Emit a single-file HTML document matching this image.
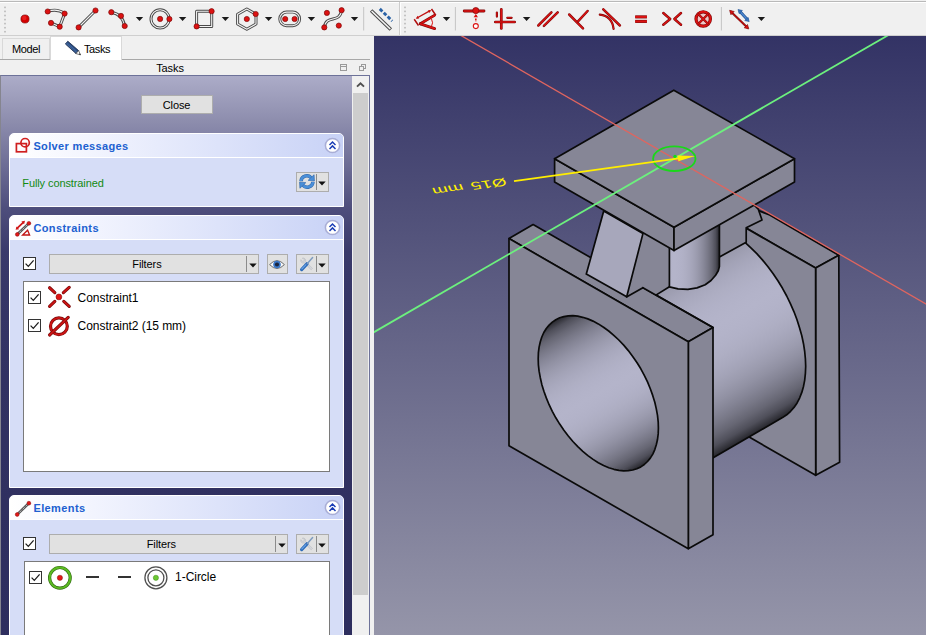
<!DOCTYPE html>
<html><head><meta charset="utf-8">
<style>
*{box-sizing:border-box;margin:0;padding:0}
html,body{width:926px;height:635px;overflow:hidden;background:#f0f0f0;font-family:"Liberation Sans",sans-serif;font-size:11px;letter-spacing:-0.1px;color:#000}
#tb{position:absolute;left:0;top:0;width:926px;height:36px;background:#f0f0f0}
#tbsvg{position:absolute;left:0;top:0}
#left{position:absolute;left:0;top:36px;width:374px;height:599px;background:#f0f0f0}
.tab{position:absolute}
#tabModel{left:2px;top:2px;width:48px;letter-spacing:-0.4px;height:21px;border:1px solid #d9d9d9;border-bottom:none;background:#f0f0f0;text-align:center;line-height:21px}
#tabTasks{left:50px;top:0;width:72px;letter-spacing:-0.4px;height:24px;background:#fff;border:1px solid #d9d9d9;border-bottom:none;line-height:25px;padding-left:33px}
#tabline2{position:absolute;left:0;top:23px;width:370px;height:1px;background:#a8a8a8}
#tabTasks{z-index:2}
#tabline{position:absolute;left:0;top:23px;width:51px;height:1px;background:#d9d9d9}
#ttl{position:absolute;left:0;top:24px;width:374px;height:15px;text-align:center;line-height:16px;padding-right:34px}
#frame{position:absolute;left:0;top:39px;width:370px;height:560px;border:1px solid #6d7299;border-left-color:#85858f;border-bottom:none}
#panel{position:absolute;left:1px;top:40px;width:351px;height:559px;background:linear-gradient(rgb(172,172,200) 0px,rgb(142,142,174) 44px,rgb(110,110,150) 88px,rgb(78,78,124) 132px,rgb(58,58,106) 176px,rgb(54,54,102) 220px,rgb(50,50,98) 300px,rgb(46,46,94) 559px)}
#sb{position:absolute;left:352px;top:40px;width:17px;height:559px;background:#f0f0f0}
#sbthumb{position:absolute;left:1px;top:17px;width:15px;height:502px;background:#cdcdcd}
.grp{position:absolute;left:8px;width:335px;background:#d6ddf7;border-radius:5px 5px 0 0;border:1px solid #fff;}
.gh{height:24px;background:linear-gradient(90deg,#ffffff 0%,#f2f4fe 25%,#c8d2f6 100%);border-radius:4px 4px 0 0;border-bottom:1px solid #fff;font-weight:bold;color:#2060d0;font-size:11px;line-height:25px;padding-left:23.4px;position:relative}
.gi{position:absolute;left:2px;top:2px}.chev{position:absolute;left:313.5px;top:2.6px}
.btn{position:absolute;background:#e1e1e1;border:1px solid #adadad;text-align:center}
.list{position:absolute;background:#fff;border:1px solid #7a7a7a}
.cb{position:absolute;width:13px;height:13px;border:1px solid #333;background:#fff}
.li{position:absolute;font-size:12px;letter-spacing:-0.05px;white-space:nowrap}
#view{position:absolute;left:374px;top:36px;width:552px;height:599px;overflow:hidden;background:linear-gradient(#333365 0,#9595a9 100%)}
</style></head><body>
<div id="tb"><svg id="tbsvg" width="926" height="36" viewBox="0 0 926 36"><rect x="0" y="1" width="926" height="1" fill="#b9b9b9"/><rect x="0" y="2" width="926" height="1" fill="#ffffff"/><rect x="0" y="35" width="926" height="1" fill="#cfcfcf"/>
<rect x="4.2" y="6.6" width="1.6" height="1.6" fill="#b8b8b8"/>
<rect x="4.2" y="10.6" width="1.6" height="1.6" fill="#b8b8b8"/>
<rect x="4.2" y="14.7" width="1.6" height="1.6" fill="#b8b8b8"/>
<rect x="4.2" y="18.8" width="1.6" height="1.6" fill="#b8b8b8"/>
<rect x="4.2" y="22.8" width="1.6" height="1.6" fill="#b8b8b8"/>
<rect x="4.2" y="26.9" width="1.6" height="1.6" fill="#b8b8b8"/>
<rect x="4.2" y="30.9" width="1.6" height="1.6" fill="#b8b8b8"/>
<circle cx="25" cy="19" r="4.1" fill="#d40000" stroke="#7c0909" stroke-width="0.6"/>
<circle cx="24.3" cy="18" r="2.2" fill="#f02a2a" opacity="0.7"/>
<path d="M47.7 11.5 Q57 8 64.6 13.6 L59.7 26.7 L51 22.9" fill="none" stroke="#4a4a4a" stroke-width="3.0" stroke-linecap="round" stroke-linejoin="round"/>
<path d="M47.7 11.5 Q57 8 64.6 13.6 L59.7 26.7 L51 22.9" fill="none" stroke="#f4f4f4" stroke-width="1.1" stroke-linecap="round" stroke-linejoin="round"/>
<circle cx="47.7" cy="11.5" r="2.6" fill="#dc1212" stroke="#7c0909" stroke-width="0.7"/>
<circle cx="64.6" cy="13.6" r="2.6" fill="#dc1212" stroke="#7c0909" stroke-width="0.7"/>
<circle cx="59.7" cy="26.7" r="2.6" fill="#dc1212" stroke="#7c0909" stroke-width="0.7"/>
<circle cx="51.0" cy="22.9" r="2.6" fill="#dc1212" stroke="#7c0909" stroke-width="0.7"/>
<path d="M78.6 27.4 L95.5 10.5" fill="none" stroke="#4a4a4a" stroke-width="3.0" stroke-linecap="round" stroke-linejoin="round"/>
<path d="M78.6 27.4 L95.5 10.5" fill="none" stroke="#f4f4f4" stroke-width="1.1" stroke-linecap="round" stroke-linejoin="round"/>
<circle cx="78.6" cy="27.4" r="2.6" fill="#dc1212" stroke="#7c0909" stroke-width="0.7"/>
<circle cx="95.5" cy="10.5" r="2.6" fill="#dc1212" stroke="#7c0909" stroke-width="0.7"/>
<path d="M111.3 12.2 Q122.5 14 124.7 26" fill="none" stroke="#4a4a4a" stroke-width="3.0" stroke-linecap="round" stroke-linejoin="round"/>
<path d="M111.3 12.2 Q122.5 14 124.7 26" fill="none" stroke="#f4f4f4" stroke-width="1.1" stroke-linecap="round" stroke-linejoin="round"/>
<circle cx="111.3" cy="12.2" r="2.6" fill="#dc1212" stroke="#7c0909" stroke-width="0.7"/>
<circle cx="121.0" cy="15.9" r="2.6" fill="#dc1212" stroke="#7c0909" stroke-width="0.7"/>
<circle cx="124.7" cy="26.0" r="2.6" fill="#dc1212" stroke="#7c0909" stroke-width="0.7"/>
<path d="M135.8 17.0 h7.4 l-3.7 3.9 z" fill="#1a1a1a"/>
<circle cx="160.1" cy="18.9" r="9.1" fill="none" stroke="#4a4a4a" stroke-width="3"/>
<circle cx="160.1" cy="18.9" r="9.1" fill="none" stroke="#f4f4f4" stroke-width="1.1"/>
<circle cx="160.1" cy="18.9" r="2.6" fill="#dc1212" stroke="#7c0909" stroke-width="0.7"/>
<circle cx="169.4" cy="19.0" r="2.6" fill="#dc1212" stroke="#7c0909" stroke-width="0.7"/>
<path d="M178.9 17.0 h7.4 l-3.7 3.9 z" fill="#1a1a1a"/>
<path d="M196.6 11.3 H211.7 V26.5 H196.6 Z" fill="none" stroke="#4a4a4a" stroke-width="3.0" stroke-linecap="round" stroke-linejoin="round"/>
<path d="M196.6 11.3 H211.7 V26.5 H196.6 Z" fill="none" stroke="#f4f4f4" stroke-width="1.1" stroke-linecap="round" stroke-linejoin="round"/>
<circle cx="211.6" cy="11.2" r="2.6" fill="#dc1212" stroke="#7c0909" stroke-width="0.7"/>
<circle cx="196.6" cy="26.4" r="2.6" fill="#dc1212" stroke="#7c0909" stroke-width="0.7"/>
<path d="M221.7 17.0 h7.4 l-3.7 3.9 z" fill="#1a1a1a"/>
<path d="M246.8 9 L256 14.3 L256 24 L246.8 29.3 L237.6 24 L237.6 14.3 Z" fill="none" stroke="#4a4a4a" stroke-width="3.0" stroke-linecap="round" stroke-linejoin="round"/>
<path d="M246.8 9 L256 14.3 L256 24 L246.8 29.3 L237.6 24 L237.6 14.3 Z" fill="none" stroke="#f4f4f4" stroke-width="1.1" stroke-linecap="round" stroke-linejoin="round"/>
<circle cx="246.8" cy="19.0" r="2.6" fill="#dc1212" stroke="#7c0909" stroke-width="0.7"/>
<circle cx="255.7" cy="14.0" r="2.6" fill="#dc1212" stroke="#7c0909" stroke-width="0.7"/>
<path d="M264.9 17.0 h7.4 l-3.7 3.9 z" fill="#1a1a1a"/>
<rect x="279.8" y="12.1" width="19.8" height="13.6" rx="6.8" fill="none" stroke="#4a4a4a" stroke-width="3"/>
<rect x="279.8" y="12.1" width="19.8" height="13.6" rx="6.8" fill="none" stroke="#f4f4f4" stroke-width="1.1"/>
<circle cx="285.2" cy="19.0" r="2.6" fill="#dc1212" stroke="#7c0909" stroke-width="0.7"/>
<circle cx="294.6" cy="19.0" r="2.6" fill="#dc1212" stroke="#7c0909" stroke-width="0.7"/>
<path d="M307.7 17.0 h7.4 l-3.7 3.9 z" fill="#1a1a1a"/>
<path d="M324.3 27.4 C326 14 340 24 341.6 10.2" fill="none" stroke="#4a4a4a" stroke-width="3.0" stroke-linecap="round" stroke-linejoin="round"/>
<path d="M324.3 27.4 C326 14 340 24 341.6 10.2" fill="none" stroke="#f4f4f4" stroke-width="1.1" stroke-linecap="round" stroke-linejoin="round"/>
<circle cx="326.9" cy="12.9" r="2.6" fill="#dc1212" stroke="#7c0909" stroke-width="0.7"/>
<circle cx="341.6" cy="10.2" r="2.6" fill="#dc1212" stroke="#7c0909" stroke-width="0.7"/>
<circle cx="324.3" cy="27.4" r="2.6" fill="#dc1212" stroke="#7c0909" stroke-width="0.7"/>
<circle cx="338.8" cy="25.6" r="2.6" fill="#dc1212" stroke="#7c0909" stroke-width="0.7"/>
<path d="M350.8 17.0 h7.4 l-3.7 3.9 z" fill="#1a1a1a"/>
<line x1="363.7" y1="7" x2="363.7" y2="30.5" stroke="#c4c4c4" stroke-width="1"/>
<path d="M371.1 10.5 L390.8 29.5" stroke="#4a4a4a" stroke-width="3.6" fill="none"/>
<path d="M371.6 11 L390.3 29" stroke="#f4f4f4" stroke-width="1.6" fill="none"/>
<path d="M379.8 8.9 L392.2 21" stroke="#2a62a6" stroke-width="2.9" stroke-dasharray="3.6 1.9" fill="none"/>
<line x1="399.6" y1="2" x2="399.6" y2="35" stroke="#c8c8c8" stroke-width="1"/>
<line x1="400.6" y1="2" x2="400.6" y2="35" stroke="#ffffff" stroke-width="1"/>
<rect x="404.2" y="6.6" width="1.6" height="1.6" fill="#b8b8b8"/>
<rect x="404.2" y="10.6" width="1.6" height="1.6" fill="#b8b8b8"/>
<rect x="404.2" y="14.7" width="1.6" height="1.6" fill="#b8b8b8"/>
<rect x="404.2" y="18.8" width="1.6" height="1.6" fill="#b8b8b8"/>
<rect x="404.2" y="22.8" width="1.6" height="1.6" fill="#b8b8b8"/>
<rect x="404.2" y="26.9" width="1.6" height="1.6" fill="#b8b8b8"/>
<rect x="404.2" y="30.9" width="1.6" height="1.6" fill="#b8b8b8"/>
<path d="M420.3 23.8 L434.4 15.4" fill="none" stroke="#7c0909" stroke-width="2.8" stroke-linecap="round" stroke-linejoin="round"/>
<path d="M420.3 23.8 L434.4 15.4" fill="none" stroke="#dc1212" stroke-width="1.7" stroke-linecap="round" stroke-linejoin="round"/>
<path d="M420.3 23.8 L434.7 28.6" fill="none" stroke="#7c0909" stroke-width="2.8" stroke-linecap="round" stroke-linejoin="round"/>
<path d="M420.3 23.8 L434.7 28.6" fill="none" stroke="#dc1212" stroke-width="1.7" stroke-linecap="round" stroke-linejoin="round"/>
<path d="M431.5 19 Q433.6 22.8 431.5 26.3" fill="none" stroke="#dc1212" stroke-width="1"/>
<path d="M414.2 19.3 L418.5 25.5 M431.5 9 L435.8 15.2" fill="none" stroke="#b00e0e" stroke-width="1.5"/>
<path d="M416.9 18 L430.2 10.7" fill="none" stroke="#c01010" stroke-width="1.4"/>
<path d="M415.8 18.7 l3.4 -0.3 l-1.5 -2.6 z M431.2 10.1 l-3.4 0.3 l1.5 2.6 z" fill="#c01010"/>
<path d="M442.8 17.0 h7.4 l-3.7 3.9 z" fill="#1a1a1a"/>
<line x1="455.4" y1="7" x2="455.4" y2="30.5" stroke="#c4c4c4" stroke-width="1"/>
<path d="M464.2 11 H484" fill="none" stroke="#7c0909" stroke-width="2.8" stroke-linecap="round" stroke-linejoin="round"/>
<path d="M464.2 11 H484" fill="none" stroke="#dc1212" stroke-width="1.7" stroke-linecap="round" stroke-linejoin="round"/>
<circle cx="475.8" cy="10.6" r="3.1" fill="#dc1212" stroke="#7c0909" stroke-width="0.7"/>
<path d="M475.8 15 V22" stroke="#dc1212" stroke-width="1.6" stroke-dasharray="2 1.4" fill="none"/>
<path d="M473.6 17.2 L475.8 14 L478 17.2 z" fill="#dc1212"/>
<circle cx="475.8" cy="26.1" r="2.5" fill="#fff" stroke="#dc1212" stroke-width="1.1"/>
<path d="M501.3 9.4 V28.5" fill="none" stroke="#7c0909" stroke-width="2.7" stroke-linecap="round" stroke-linejoin="round"/>
<path d="M501.3 9.4 V28.5" fill="none" stroke="#dc1212" stroke-width="1.6" stroke-linecap="round" stroke-linejoin="round"/>
<path d="M495.3 22 H514.7" fill="none" stroke="#7c0909" stroke-width="2.7" stroke-linecap="round" stroke-linejoin="round"/>
<path d="M495.3 22 H514.7" fill="none" stroke="#dc1212" stroke-width="1.6" stroke-linecap="round" stroke-linejoin="round"/>
<path d="M496.9 12.6 V16.6" fill="none" stroke="#7c0909" stroke-width="2.2" stroke-linecap="round" stroke-linejoin="round"/>
<path d="M496.9 12.6 V16.6" fill="none" stroke="#dc1212" stroke-width="1.1" stroke-linecap="round" stroke-linejoin="round"/>
<path d="M507.3 17.8 H511.6" fill="none" stroke="#7c0909" stroke-width="2.2" stroke-linecap="round" stroke-linejoin="round"/>
<path d="M507.3 17.8 H511.6" fill="none" stroke="#dc1212" stroke-width="1.1" stroke-linecap="round" stroke-linejoin="round"/>
<path d="M522.9 17.0 h7.4 l-3.7 3.9 z" fill="#1a1a1a"/>
<path d="M538.3 25.5 L551.4 12.4" fill="none" stroke="#7c0909" stroke-width="2.5" stroke-linecap="round" stroke-linejoin="round"/>
<path d="M538.3 25.5 L551.4 12.4" fill="none" stroke="#dc1212" stroke-width="1.4" stroke-linecap="round" stroke-linejoin="round"/>
<path d="M543.9 25.8 L557.7 12.4" fill="none" stroke="#7c0909" stroke-width="2.5" stroke-linecap="round" stroke-linejoin="round"/>
<path d="M543.9 25.8 L557.7 12.4" fill="none" stroke="#dc1212" stroke-width="1.4" stroke-linecap="round" stroke-linejoin="round"/>
<path d="M569.2 14.5 L583 28.4" fill="none" stroke="#7c0909" stroke-width="2.5" stroke-linecap="round" stroke-linejoin="round"/>
<path d="M569.2 14.5 L583 28.4" fill="none" stroke="#dc1212" stroke-width="1.4" stroke-linecap="round" stroke-linejoin="round"/>
<path d="M578 21.3 L587.6 11" fill="none" stroke="#7c0909" stroke-width="2.5" stroke-linecap="round" stroke-linejoin="round"/>
<path d="M578 21.3 L587.6 11" fill="none" stroke="#dc1212" stroke-width="1.4" stroke-linecap="round" stroke-linejoin="round"/>
<path d="M603.3 9.3 L619.9 25.5" fill="none" stroke="#7c0909" stroke-width="2.5" stroke-linecap="round" stroke-linejoin="round"/>
<path d="M603.3 9.3 L619.9 25.5" fill="none" stroke="#dc1212" stroke-width="1.4" stroke-linecap="round" stroke-linejoin="round"/>
<path d="M599.8 14.7 Q612 16 613.6 28.9" fill="none" stroke="#7c0909" stroke-width="2.2" stroke-linecap="round" stroke-linejoin="round"/>
<path d="M599.8 14.7 Q612 16 613.6 28.9" fill="none" stroke="#dc1212" stroke-width="1.1" stroke-linecap="round" stroke-linejoin="round"/>
<path d="M635.2 16.9 H646.9" fill="none" stroke="#7c0909" stroke-width="3.1" stroke-linecap="butt" stroke-linejoin="round"/>
<path d="M635.2 16.9 H646.9" fill="none" stroke="#dc1212" stroke-width="2.0" stroke-linecap="butt" stroke-linejoin="round"/>
<path d="M635.2 21.4 H646.9" fill="none" stroke="#7c0909" stroke-width="3.1" stroke-linecap="butt" stroke-linejoin="round"/>
<path d="M635.2 21.4 H646.9" fill="none" stroke="#dc1212" stroke-width="2.0" stroke-linecap="butt" stroke-linejoin="round"/>
<path d="M663.3 13 L670.2 19 L663.3 24.8" fill="none" stroke="#7c0909" stroke-width="2.5" stroke-linecap="round" stroke-linejoin="round"/>
<path d="M663.3 13 L670.2 19 L663.3 24.8" fill="none" stroke="#dc1212" stroke-width="1.4" stroke-linecap="round" stroke-linejoin="round"/>
<path d="M681 13 L674.4 19 L681 24.8" fill="none" stroke="#7c0909" stroke-width="2.5" stroke-linecap="round" stroke-linejoin="round"/>
<path d="M681 13 L674.4 19 L681 24.8" fill="none" stroke="#dc1212" stroke-width="1.4" stroke-linecap="round" stroke-linejoin="round"/>
<circle cx="703.2" cy="19" r="7.2" fill="#f0c8c8" stroke="#7c0909" stroke-width="3.2"/>
<circle cx="703.2" cy="19" r="7.2" fill="none" stroke="#dc1212" stroke-width="2"/>
<path d="M698.7 14.5 L707.7 23.5 M707.7 14.5 L698.7 23.5" fill="none" stroke="#7c0909" stroke-width="2.3" stroke-linecap="round" stroke-linejoin="round"/>
<path d="M698.7 14.5 L707.7 23.5 M707.7 14.5 L698.7 23.5" fill="none" stroke="#dc1212" stroke-width="1.2" stroke-linecap="round" stroke-linejoin="round"/>
<line x1="721.4" y1="7" x2="721.4" y2="30.5" stroke="#c4c4c4" stroke-width="1"/>
<path d="M731 11.7 L747.3 27.6" fill="none" stroke="#7c0909" stroke-width="2.1" stroke-linecap="round" stroke-linejoin="round"/>
<path d="M731 11.7 L747.3 27.6" fill="none" stroke="#dc1212" stroke-width="1.0" stroke-linecap="round" stroke-linejoin="round"/>
<path d="M729.6 10.3 l4.6 1.2 l-3.3 3.3 z M748.8 29 l-4.6 -1.2 l3.3 -3.3 z" fill="#dc1212" stroke="#7c0909" stroke-width="0.6"/>
<path d="M739.5 11 L747.8 20" stroke="#1c4f96" stroke-width="2.8" fill="none"/>
<path d="M739.5 11 L747.8 20" stroke="#4f8ad0" stroke-width="1.4" fill="none"/>
<path d="M738 9.5 l4.4 1 l-3.2 3.2 z M749.2 21.6 l-4.4 -1 l3.2 -3.2 z" fill="#3a74bd" stroke="#1c4f96" stroke-width="0.6"/>
<path d="M757.7 17.0 h7.4 l-3.7 3.9 z" fill="#1a1a1a"/></svg></div>
<div id="left">
 <div id="tabModel" class="tab">Model</div>
 <div id="tabTasks" class="tab">Tasks<svg style="position:absolute;left:12px;top:2px" width="20" height="18" viewBox="62 38 20 18"><path d="M66.8 40.2 L77.6 49.6 L75 52.6 L64.4 43 Z" fill="#27497e" stroke="#16284a" stroke-width="0.8"/><path d="M65.8 41.6 L76.6 51 M65 42.4 L75.8 51.8" stroke="#5d84bd" stroke-width="0.5" fill="none"/><path d="M77.6 49.6 L79.6 53.9 L75 52.6 Z" fill="#fff" stroke="#222" stroke-width="0.6"/><path d="M79.6 53.9 L78 53.3 L78.8 52.2 Z" fill="#111"/></svg></div><div id="tabline2"></div>
 <div id="ttl">Tasks<svg style="position:absolute;left:338px;top:3px" width="32" height="10" viewBox="338 63 32 10"><rect x="340.5" y="64.5" width="6" height="6" fill="none" stroke="#9a9a9a"/><line x1="340" y1="66.5" x2="347" y2="66.5" stroke="#9a9a9a"/><rect x="361.5" y="64.5" width="4" height="4" fill="none" stroke="#9a9a9a"/><rect x="359.5" y="66.5" width="4" height="4" fill="#f0f0f0" stroke="#9a9a9a"/></svg></div>
 <div id="panel"><div class="btn" style="left:139.5px;top:18.8px;width:72px;height:19.6px;line-height:18px">Close</div><div class="grp" style="top:57px;height:74px"><div class="gh" style="letter-spacing:0.35px">Solver messages<svg class="gi" width="20" height="20" viewBox="12 136 20 20"><rect x="16.4" y="143.6" width="10" height="8.2" fill="none" stroke="#cf1f1f" stroke-width="1.7"/><circle cx="25.1" cy="142.7" r="4.2" fill="none" stroke="#cf1f1f" stroke-width="1.7"/></svg><svg class="chev" width="17" height="17" viewBox="0 0 17 17"><circle cx="8.5" cy="8.5" r="7.1" fill="#fff" stroke="#a9aed6" stroke-width="1.5"/><path d="M5.5 8 L8.5 5 L11.5 8 M5.5 11.9 L8.5 8.9 L11.5 11.9" fill="none" stroke="#1a3db5" stroke-width="1.45"/></svg></div><div style="position:absolute;left:12.3px;top:42.6px;color:#128a12">Fully constrained</div><div class="btn" style="left:286.2px;top:38.0px;width:33px;height:20px"><svg width="18" height="17" viewBox="0 0 17 16" style="position:absolute;left:0.6px;top:0.4px"><path d="M2.9 7.6 A5.4 5.2 0 0 1 12.3 4.3" fill="none" stroke="#2c64ab" stroke-width="3.3"/><path d="M2.9 7.6 A5.4 5.2 0 0 1 12.3 4.3" fill="none" stroke="#4a8fd8" stroke-width="2.3"/><path d="M9.6 6.9 L15.5 7.6 L15.2 1.6 Z" fill="#4a8fd8" stroke="#2c64ab" stroke-width="0.6"/><path d="M14.1 8.4 A5.4 5.2 0 0 1 4.7 11.7" fill="none" stroke="#2c64ab" stroke-width="3.3"/><path d="M14.1 8.4 A5.4 5.2 0 0 1 4.7 11.7" fill="none" stroke="#4a8fd8" stroke-width="2.3"/><path d="M7.4 9.1 L1.5 8.4 L1.8 14.4 Z" fill="#4a8fd8" stroke="#2c64ab" stroke-width="0.6"/></svg><div style="position:absolute;left:18.4px;top:1px;width:1px;height:15.5px;background:#8c8c8c"></div><svg width="8" height="5" viewBox="0 0 8 5" style="position:absolute;left:21.2px;top:8px"><path d="M0.3 0.4 H7.7 L4 4.4 Z" fill="#111"/></svg></div></div><div class="grp" style="top:139px;height:273px"><div class="gh" style="letter-spacing:0.4px">Constraints<svg class="gi" width="20" height="20" viewBox="12 216 20 20"><path d="M17.4 232.3 L28.8 221.4" stroke="#555" stroke-width="2.6"/><path d="M17.4 232.3 L28.8 221.4" stroke="#e8e8e8" stroke-width="1" stroke-dasharray="1 1"/><circle cx="17.3" cy="232.4" r="1.9" fill="#e01818" stroke="#8a0c0c" stroke-width="0.5"/><circle cx="28.9" cy="221.3" r="1.9" fill="#e01818" stroke="#8a0c0c" stroke-width="0.5"/><path d="M17 226.4 L23.6 220.2" stroke="#d01616" stroke-width="1.7"/><path d="M15.6 227.8 l3.6 -0.6 l-2.7 -2.8 z M25 218.8 l-3.6 0.6 l2.7 2.8 z" fill="#d01616"/><path d="M22.6 233 H29.6 L27.6 228.2 Z" fill="none" stroke="#c01414" stroke-width="1.3"/></svg><svg class="chev" width="17" height="17" viewBox="0 0 17 17"><circle cx="8.5" cy="8.5" r="7.1" fill="#fff" stroke="#a9aed6" stroke-width="1.5"/><path d="M5.5 8 L8.5 5 L11.5 8 M5.5 11.9 L8.5 8.9 L11.5 11.9" fill="none" stroke="#1a3db5" stroke-width="1.45"/></svg></div><div class="cb" style="left:13.0px;top:41.0px"><svg width="11" height="11" viewBox="0 0 11 11" style="display:block"><path d="M1.6 5.6 L4.3 8.4 L9.6 2.3" fill="none" stroke="#1a1a1a" stroke-width="1.25"/></svg></div><div class="btn" style="left:39.2px;top:38.0px;width:209.5px;height:20px;line-height:19px;padding-right:14px">Filters<div style="position:absolute;left:196px;top:1px;width:1px;height:15.5px;background:#8c8c8c"></div><svg width="8" height="5" viewBox="0 0 8 5" style="position:absolute;left:198.4px;top:8px"><path d="M0.3 0.4 H7.7 L4 4.4 Z" fill="#111"/></svg></div><div class="btn" style="left:257.1px;top:38.0px;width:20.5px;height:20px"><svg width="18" height="17" viewBox="0 0 18 17" style="position:absolute;left:0.3px;top:0.6px"><path d="M1.6 8.6 Q9 0.6 16.4 8.6 Q9 16.4 1.6 8.6 Z" fill="#fafafa" stroke="#6a6a6a" stroke-width="1"/><circle cx="9" cy="8.5" r="3.8" fill="#3b78c8"/><circle cx="9" cy="8.5" r="2.1" fill="#1c2740"/></svg></div><div class="btn" style="left:286.2px;top:38.0px;width:33px;height:20px"><svg width="18" height="17" viewBox="0 0 18 17" style="position:absolute;left:1px;top:0px"><path d="M4.2 3.2 a2.6 2.6 0 0 1 3.4 3.3 L14.6 13.4 L13.2 14.8 L6.2 7.9 a2.6 2.6 0 0 1 -3.4 -3.3 l1.8 1.7 l1.6 -0.4 l0.3 -1.5 z" fill="#d4d6da" stroke="#b4b6bc" stroke-width="0.5"/><path d="M3.6 14.6 L9 8.8" stroke="#2c6ab8" stroke-width="3.2" stroke-linecap="round"/><path d="M3.8 14 L8 9.6" stroke="#6aa2e4" stroke-width="1.1" stroke-linecap="round"/><path d="M9.4 8.4 L14.6 2.6" stroke="#7f9cc0" stroke-width="1.5" stroke-linecap="round"/></svg><div style="position:absolute;left:18.4px;top:1px;width:1px;height:15.5px;background:#8c8c8c"></div><svg width="8" height="5" viewBox="0 0 8 5" style="position:absolute;left:21.2px;top:8px"><path d="M0.3 0.4 H7.7 L4 4.4 Z" fill="#111"/></svg></div><div class="list" style="left:13.0px;top:64.9px;width:306.5px;height:191.5px"><div class="cb" style="left:4.0px;top:8.8px"><svg width="11" height="11" viewBox="0 0 11 11" style="display:block"><path d="M1.6 5.6 L4.3 8.4 L9.6 2.3" fill="none" stroke="#1a1a1a" stroke-width="1.25"/></svg></div><svg style="position:absolute;left:22px;top:3.4px" width="26" height="24" viewBox="46 285 26 24"><g stroke-linecap="round"><path d="M49.6 287.8 L54.8 292.6 M69.2 287.4 L63.4 292.6 M49.6 306.4 L54.8 301.4 M69.2 306.4 L63.8 301.4" stroke="#7a0a0a" stroke-width="3.2"/><path d="M49.6 287.8 L54.8 292.6 M69.2 287.4 L63.4 292.6 M49.6 306.4 L54.8 301.4 M69.2 306.4 L63.8 301.4" stroke="#cc1414" stroke-width="1.8"/></g><circle cx="58.9" cy="296.9" r="2.9" fill="#e01414" stroke="#8a0c0c" stroke-width="0.6"/></svg><div class="li" style="left:53.6px;top:9.5px">Constraint1</div><div class="cb" style="left:4.0px;top:37.3px"><svg width="11" height="11" viewBox="0 0 11 11" style="display:block"><path d="M1.6 5.6 L4.3 8.4 L9.6 2.3" fill="none" stroke="#1a1a1a" stroke-width="1.25"/></svg></div><svg style="position:absolute;left:22px;top:31.8px" width="26" height="24" viewBox="46 313 26 24"><circle cx="58.9" cy="325.3" r="8.4" fill="#fff" stroke="#7a0a0a" stroke-width="3.2"/><circle cx="58.9" cy="325.3" r="8.4" fill="none" stroke="#cc1414" stroke-width="1.8"/><path d="M49.6 334 L68.2 316.4" stroke="#7a0a0a" stroke-width="3.2" stroke-linecap="round"/><path d="M49.6 334 L68.2 316.4" stroke="#cc1414" stroke-width="1.8" stroke-linecap="round"/></svg><div class="li" style="left:53.6px;top:37.3px">Constraint2 (15 mm)</div></div></div><div class="grp" style="top:419px;height:160px"><div class="gh" style="letter-spacing:0.4px">Elements<svg class="gi" width="20" height="20" viewBox="12 496 20 20"><path d="M17.3 512.4 L28.8 501.3" stroke="#555" stroke-width="2.6"/><path d="M17.3 512.4 L28.8 501.3" stroke="#e8e8e8" stroke-width="1" stroke-dasharray="1 1"/><circle cx="17.2" cy="512.5" r="1.9" fill="#e01818" stroke="#8a0c0c" stroke-width="0.5"/><circle cx="28.9" cy="501.2" r="1.9" fill="#e01818" stroke="#8a0c0c" stroke-width="0.5"/></svg><svg class="chev" width="17" height="17" viewBox="0 0 17 17"><circle cx="8.5" cy="8.5" r="7.1" fill="#fff" stroke="#a9aed6" stroke-width="1.5"/><path d="M5.5 8 L8.5 5 L11.5 8 M5.5 11.9 L8.5 8.9 L11.5 11.9" fill="none" stroke="#1a3db5" stroke-width="1.45"/></svg></div><div class="cb" style="left:13.0px;top:41.2px"><svg width="11" height="11" viewBox="0 0 11 11" style="display:block"><path d="M1.6 5.6 L4.3 8.4 L9.6 2.3" fill="none" stroke="#1a1a1a" stroke-width="1.25"/></svg></div><div class="btn" style="left:39.0px;top:38.0px;width:238.6px;height:20px;line-height:19px;padding-right:14px">Filters<div style="position:absolute;left:225.4px;top:1px;width:1px;height:15.5px;background:#8c8c8c"></div><svg width="8" height="5" viewBox="0 0 8 5" style="position:absolute;left:227.8px;top:8px"><path d="M0.3 0.4 H7.7 L4 4.4 Z" fill="#111"/></svg></div><div class="btn" style="left:286.2px;top:38.0px;width:33px;height:20px"><svg width="18" height="17" viewBox="0 0 18 17" style="position:absolute;left:1px;top:0px"><path d="M4.2 3.2 a2.6 2.6 0 0 1 3.4 3.3 L14.6 13.4 L13.2 14.8 L6.2 7.9 a2.6 2.6 0 0 1 -3.4 -3.3 l1.8 1.7 l1.6 -0.4 l0.3 -1.5 z" fill="#d4d6da" stroke="#b4b6bc" stroke-width="0.5"/><path d="M3.6 14.6 L9 8.8" stroke="#2c6ab8" stroke-width="3.2" stroke-linecap="round"/><path d="M3.8 14 L8 9.6" stroke="#6aa2e4" stroke-width="1.1" stroke-linecap="round"/><path d="M9.4 8.4 L14.6 2.6" stroke="#7f9cc0" stroke-width="1.5" stroke-linecap="round"/></svg><div style="position:absolute;left:18.4px;top:1px;width:1px;height:15.5px;background:#8c8c8c"></div><svg width="8" height="5" viewBox="0 0 8 5" style="position:absolute;left:21.2px;top:8px"><path d="M0.3 0.4 H7.7 L4 4.4 Z" fill="#111"/></svg></div><div class="list" style="left:13.5px;top:64.9px;width:306.5px;height:90px"><div class="cb" style="left:4.6px;top:9.2px"><svg width="11" height="11" viewBox="0 0 11 11" style="display:block"><path d="M1.6 5.6 L4.3 8.4 L9.6 2.3" fill="none" stroke="#1a1a1a" stroke-width="1.25"/></svg></div><svg style="position:absolute;left:22.7px;top:3.1px" width="26" height="25" viewBox="47 564 26 25"><circle cx="59.9" cy="576.8" r="10.3" fill="#fff" stroke="#2f6a10" stroke-width="3.2"/><circle cx="59.9" cy="576.8" r="10.3" fill="none" stroke="#5cba22" stroke-width="1.9"/><circle cx="59.9" cy="576.8" r="2.6" fill="#e01818" stroke="#8a0c0c" stroke-width="0.5"/></svg><div style="position:absolute;left:61px;top:14.4px;width:13.6px;height:2px;background:#333"></div><div style="position:absolute;left:93.1px;top:14.4px;width:13.6px;height:2px;background:#333"></div><svg style="position:absolute;left:118.7px;top:3.1px" width="26" height="25" viewBox="143 564 26 25"><circle cx="155.9" cy="576.8" r="11" fill="#fff" stroke="#505050" stroke-width="1.3"/><circle cx="155.9" cy="576.8" r="8" fill="#fff" stroke="#505050" stroke-width="1.3"/><circle cx="155.9" cy="576.8" r="2.6" fill="#6cc832" stroke="#3c8a14" stroke-width="0.5"/></svg><div class="li" style="left:150.6px;top:8.6px">1-Circle</div></div></div></div>
 <div id="frame"></div><div id="sb"><svg style="position:absolute;left:0;top:0" width="17" height="17" viewBox="0 0 17 17"><path d="M5 10.6 L8.5 7.2 L12 10.6" fill="none" stroke="#505050" stroke-width="1.9"/></svg><div id="sbthumb"></div></div>
</div>
<div id="view"><svg id="v3d" width="552" height="599" viewBox="374 36 552 599" style="position:absolute;left:0;top:0"><defs><linearGradient id="gcyl" gradientUnits="userSpaceOnUse" x1="670.5" y1="223.6" x2="782.5" y2="417.6"><stop offset="0.000" stop-color="rgb(38,38,44)"/><stop offset="0.042" stop-color="rgb(79,79,90)"/><stop offset="0.083" stop-color="rgb(102,102,115)"/><stop offset="0.125" stop-color="rgb(119,119,134)"/><stop offset="0.167" stop-color="rgb(133,133,150)"/><stop offset="0.208" stop-color="rgb(145,145,163)"/><stop offset="0.250" stop-color="rgb(155,155,174)"/><stop offset="0.292" stop-color="rgb(163,163,183)"/><stop offset="0.333" stop-color="rgb(169,169,190)"/><stop offset="0.375" stop-color="rgb(174,174,195)"/><stop offset="0.417" stop-color="rgb(177,177,199)"/><stop offset="0.458" stop-color="rgb(179,179,201)"/><stop offset="0.500" stop-color="rgb(180,180,202)"/><stop offset="0.542" stop-color="rgb(179,179,201)"/><stop offset="0.583" stop-color="rgb(177,177,199)"/><stop offset="0.625" stop-color="rgb(174,174,195)"/><stop offset="0.667" stop-color="rgb(169,169,190)"/><stop offset="0.708" stop-color="rgb(163,163,183)"/><stop offset="0.750" stop-color="rgb(155,155,174)"/><stop offset="0.792" stop-color="rgb(145,145,163)"/><stop offset="0.833" stop-color="rgb(133,133,150)"/><stop offset="0.875" stop-color="rgb(119,119,134)"/><stop offset="0.917" stop-color="rgb(102,102,115)"/><stop offset="0.958" stop-color="rgb(79,79,90)"/><stop offset="1.000" stop-color="rgb(38,38,44)"/></linearGradient><linearGradient id="ghole" gradientUnits="userSpaceOnUse" x1="555.8" y1="319.7" x2="640.8" y2="466.9"><stop offset="0.000" stop-color="rgb(38,38,44)"/><stop offset="0.042" stop-color="rgb(79,79,90)"/><stop offset="0.083" stop-color="rgb(102,102,115)"/><stop offset="0.125" stop-color="rgb(119,119,134)"/><stop offset="0.167" stop-color="rgb(133,133,150)"/><stop offset="0.208" stop-color="rgb(145,145,163)"/><stop offset="0.250" stop-color="rgb(155,155,174)"/><stop offset="0.292" stop-color="rgb(163,163,183)"/><stop offset="0.333" stop-color="rgb(169,169,190)"/><stop offset="0.375" stop-color="rgb(174,174,195)"/><stop offset="0.417" stop-color="rgb(177,177,199)"/><stop offset="0.458" stop-color="rgb(179,179,201)"/><stop offset="0.500" stop-color="rgb(180,180,202)"/><stop offset="0.542" stop-color="rgb(179,179,201)"/><stop offset="0.583" stop-color="rgb(177,177,199)"/><stop offset="0.625" stop-color="rgb(174,174,195)"/><stop offset="0.667" stop-color="rgb(169,169,190)"/><stop offset="0.708" stop-color="rgb(163,163,183)"/><stop offset="0.750" stop-color="rgb(155,155,174)"/><stop offset="0.792" stop-color="rgb(145,145,163)"/><stop offset="0.833" stop-color="rgb(133,133,150)"/><stop offset="0.875" stop-color="rgb(119,119,134)"/><stop offset="0.917" stop-color="rgb(102,102,115)"/><stop offset="0.958" stop-color="rgb(79,79,90)"/><stop offset="1.000" stop-color="rgb(38,38,44)"/></linearGradient><linearGradient id="gneck" gradientUnits="userSpaceOnUse" x1="629.2" y1="0.0" x2="719.4" y2="0.0"><stop offset="0.000" stop-color="rgb(38,38,44)"/><stop offset="0.042" stop-color="rgb(79,79,90)"/><stop offset="0.083" stop-color="rgb(102,102,115)"/><stop offset="0.125" stop-color="rgb(119,119,134)"/><stop offset="0.167" stop-color="rgb(133,133,150)"/><stop offset="0.208" stop-color="rgb(145,145,163)"/><stop offset="0.250" stop-color="rgb(155,155,174)"/><stop offset="0.292" stop-color="rgb(163,163,183)"/><stop offset="0.333" stop-color="rgb(169,169,190)"/><stop offset="0.375" stop-color="rgb(174,174,195)"/><stop offset="0.417" stop-color="rgb(177,177,199)"/><stop offset="0.458" stop-color="rgb(179,179,201)"/><stop offset="0.500" stop-color="rgb(180,180,202)"/><stop offset="0.542" stop-color="rgb(179,179,201)"/><stop offset="0.583" stop-color="rgb(177,177,199)"/><stop offset="0.625" stop-color="rgb(174,174,195)"/><stop offset="0.667" stop-color="rgb(169,169,190)"/><stop offset="0.708" stop-color="rgb(163,163,183)"/><stop offset="0.750" stop-color="rgb(155,155,174)"/><stop offset="0.792" stop-color="rgb(145,145,163)"/><stop offset="0.833" stop-color="rgb(133,133,150)"/><stop offset="0.875" stop-color="rgb(119,119,134)"/><stop offset="0.917" stop-color="rgb(102,102,115)"/><stop offset="0.958" stop-color="rgb(79,79,90)"/><stop offset="1.000" stop-color="rgb(38,38,44)"/></linearGradient></defs><polygon points="700.0,187.5 769.7,215.0 838.8,255.2 815.6,268.1 676.4,187.8" fill="#868696" stroke="#0a0a0a" stroke-width="1.7" stroke-linejoin="round" />
<polygon points="815.6,268.1 838.8,255.2 839.6,462.2 815.7,475.3" fill="#868696" stroke="#0a0a0a" stroke-width="1.7" stroke-linejoin="round" />
<polygon points="636.3,165.0 815.6,268.1 815.7,475.3 636.3,372.2" fill="#868696" stroke="#0a0a0a" stroke-width="1.7" stroke-linejoin="round" />
<polygon points="680.0,476.9 782.5,417.6 786.7,414.8 790.6,411.3 794.0,407.4 797.1,402.9 799.7,397.8 801.8,392.4 803.5,386.4 804.7,380.1 805.4,373.4 805.7,366.3 805.4,359.0 804.7,351.5 803.5,343.7 801.8,335.8 799.6,327.9 797.0,319.8 794.0,311.8 790.5,303.9 786.7,296.0 782.5,288.3 777.9,280.8 773.0,273.5 767.8,266.5 762.4,259.9 756.8,253.6 750.9,247.8 745.0,242.4 738.9,237.4 732.7,233.0 726.5,229.2 720.3,225.9 714.1,223.1 708.0,221.0 702.0,219.5 696.2,218.6 690.5,218.4 685.1,218.7 679.9,219.7 675.1,221.4 670.5,223.6 568.0,282.9" fill="url(#gcyl)" stroke="#0a0a0a" stroke-width="1.7" stroke-linejoin="round" />
<polygon points="509.0,238.6 688.3,341.7 713.0,327.6 533.1,224.6" fill="#868696" stroke="#0a0a0a" stroke-width="1.7" stroke-linejoin="round" />
<polygon points="643.0,233.4 626.5,296.9 642.9,287.7 655.9,295.1 669.4,286.8 719.4,257.0 746.2,242.3 746.2,227.8 762.0,220.0 758.3,209.2 754.0,204.8 700.0,190.0" fill="#868696" stroke="none" stroke-width="0" stroke-linejoin="round" />
<polyline points="626.5,296.9 642.9,287.7" fill="none" stroke="#0a0a0a" stroke-width="1.7" stroke-linejoin="round" stroke-linecap="round"/>
<polyline points="655.9,295.1 669.4,286.8" fill="none" stroke="#0a0a0a" stroke-width="1.7" stroke-linejoin="round" stroke-linecap="round"/>
<polyline points="642.9,287.7 713.0,327.6" fill="none" stroke="#0a0a0a" stroke-width="1.7" stroke-linejoin="round" stroke-linecap="round"/>
<polyline points="719.4,257.0 746.2,242.3 746.2,227.8 762.0,220.0 758.3,209.2 754.0,204.8" fill="none" stroke="#0a0a0a" stroke-width="1.7" stroke-linejoin="round" stroke-linecap="round"/>
<polygon points="669.4,235.0 669.4,286.8 678.0,288.8 687.9,289.4 697.0,287.9 705.2,284.7 711.0,280.5 715.6,275.2 718.3,270.8 719.4,266.6 719.4,215.0" fill="url(#gneck)" stroke="none" stroke-width="0" stroke-linejoin="round" />
<polyline points="669.4,240.0 669.4,286.8 678.0,288.8 687.9,289.4 697.0,287.9 705.2,284.7 711.0,280.5 715.6,275.2 718.3,270.8 719.4,266.6 719.4,215.0" fill="none" stroke="#0a0a0a" stroke-width="1.7" stroke-linejoin="round" stroke-linecap="round"/>
<polygon points="603.7,210.9 643.0,233.4 626.7,296.8 586.3,274.1" fill="#a7a7bb" stroke="#0a0a0a" stroke-width="1.7" stroke-linejoin="round" />
<polygon points="554.6,158.7 674.0,227.2 674.0,250.6 554.6,182.1" fill="#868696" stroke="#0a0a0a" stroke-width="1.7" stroke-linejoin="round" />
<polygon points="674.0,227.2 794.5,158.7 794.5,182.1 674.0,250.6" fill="#868696" stroke="#0a0a0a" stroke-width="1.7" stroke-linejoin="round" />
<polygon points="673.8,90.2 794.5,158.7 674.0,227.2 554.6,158.7" fill="#868696" stroke="#0a0a0a" stroke-width="1.7" stroke-linejoin="round" />
<polygon points="688.3,341.7 713.0,327.6 713.0,534.7 688.3,548.7" fill="#868696" stroke="#0a0a0a" stroke-width="1.7" stroke-linejoin="round" />
<polygon points="509.0,238.6 688.3,341.7 688.3,548.7 509.0,445.8" fill="#868696" stroke="#0a0a0a" stroke-width="1.7" stroke-linejoin="round" />
<polygon points="640.8,466.9 644.3,464.5 647.5,461.5 650.3,458.1 652.8,454.1 654.8,449.6 656.3,444.8 657.5,439.5 658.2,433.9 658.4,428.0 658.2,421.8 657.5,415.4 656.3,408.9 654.8,402.2 652.7,395.4 650.3,388.7 647.5,381.9 644.3,375.3 640.8,368.8 636.9,362.5 632.7,356.4 628.3,350.6 623.7,345.1 618.8,340.0 613.8,335.3 608.7,331.0 603.5,327.2 598.3,323.9 593.0,321.1 587.8,318.9 582.7,317.3 577.7,316.2 572.9,315.7 568.2,315.9 563.8,316.6 559.7,317.8 555.8,319.7 552.3,322.1 549.1,325.1 546.3,328.5 543.8,332.5 541.8,337.0 540.3,341.8 539.1,347.1 538.4,352.7 538.2,358.6 538.4,364.8 539.1,371.2 540.3,377.7 541.8,384.4 543.9,391.2 546.3,397.9 549.1,404.7 552.3,411.3 555.8,417.8 559.7,424.1 563.9,430.2 568.3,436.0 572.9,441.5 577.8,446.6 582.8,451.3 587.9,455.6 593.1,459.4 598.3,462.7 603.6,465.5 608.8,467.7 613.9,469.3 618.9,470.4 623.7,470.9 628.4,470.7 632.8,470.0 636.9,468.8" fill="url(#ghole)" stroke="#0a0a0a" stroke-width="1.7" stroke-linejoin="round" />
<line x1="274.3" y1="-72.3" x2="1074.3" y2="389.7" stroke="#e0655f" stroke-width="1.3"/>
<line x1="274.3" y1="389.7" x2="1074.3" y2="-72.3" stroke="#6cf07e" stroke-width="1.8"/>
<ellipse cx="674.3" cy="158.7" rx="21.2" ry="12.3" fill="none" stroke="#1ad81a" stroke-width="1.8"/>
<circle cx="675" cy="156.4" r="1.7" fill="#13dc13"/>
<line x1="514" y1="181.1" x2="686" y2="157.4" stroke="#ffee00" stroke-width="1.7"/>
<polygon points="695.2,156.1 677.4,155.6 678.4,161.2" fill="#ffee00"/>
<text x="0" y="0" transform="matrix(-1.5366,0.2118,-0.3667,-0.8873,504.8,177.9)" font-family="Liberation Sans, sans-serif" font-size="12" fill="#fff000" style="text-rendering:geometricPrecision;word-spacing:1.4px;letter-spacing:0.12px">Ø15 mm</text></svg></div>
</body></html>
